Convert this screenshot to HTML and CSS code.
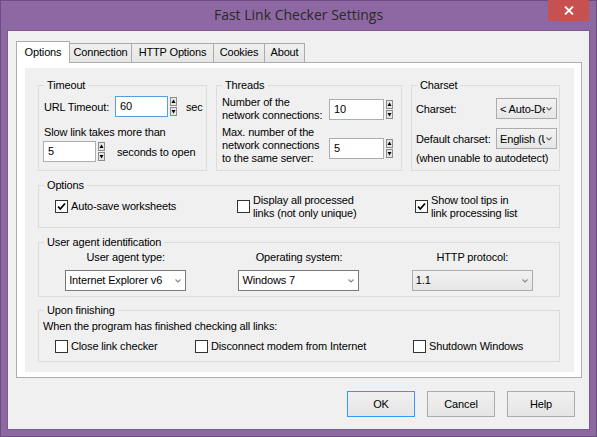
FILE: index.html
```html
<!DOCTYPE html>
<html>
<head>
<meta charset="utf-8">
<link rel="stylesheet" href="styles.css">
</head>
<body>
<div class="window">
  <div class="titlebar">
    <div class="title">Fast Link Checker Settings</div>
    <div class="close"><svg width="10" height="9" viewBox="0 0 10 9"><path d="M1 0.5L9 8.5M9 0.5L1 8.5" stroke="#fff" stroke-width="1.8"/></svg></div>
  </div>
  <div class="client">
    <div class="tabs">
      <div class="tab active t-options">Options</div>
      <div class="tab t-conn">Connection</div>
      <div class="tab t-http">HTTP Options</div>
      <div class="tab t-cookies">Cookies</div>
      <div class="tab t-about">About</div>
    </div>
    <div class="panel">
      <div class="page">
        <div class="row1">
          <div class="group g-timeout">
            <span class="gt">Timeout</span>
            <div class="row">
              <span class="lbl-url">URL Timeout:</span>
              <div class="spin"><div class="edit focus">60</div><svg class="spinbtn" width="8" height="21" viewBox="0 0 8 21"><rect x="0.5" y="1.5" width="6" height="8" fill="#e6e6e6" stroke="#8c8c8c"/><path d="M1.5 7h4L3.5 3.5z" fill="#000"/><rect x="0.5" y="11.5" width="6" height="8" fill="#e6e6e6" stroke="#8c8c8c"/><path d="M1.5 14h4L3.5 17.5z" fill="#000"/></svg></div>
              <span class="sec">sec</span>
            </div>
            <div class="slow">Slow link takes more than</div>
            <div class="row r-open">
              <div class="spin"><div class="edit">5</div><svg class="spinbtn" width="8" height="21" viewBox="0 0 8 21"><rect x="0.5" y="1.5" width="6" height="8" fill="#e6e6e6" stroke="#8c8c8c"/><path d="M1.5 7h4L3.5 3.5z" fill="#000"/><rect x="0.5" y="11.5" width="6" height="8" fill="#e6e6e6" stroke="#8c8c8c"/><path d="M1.5 14h4L3.5 17.5z" fill="#000"/></svg></div>
              <span class="open">seconds to open</span>
            </div>
          </div>
          <div class="group g-threads">
            <span class="gt">Threads</span>
            <div class="row">
              <span class="tlbl">Number of the<br>network connections:</span>
              <div class="spin"><div class="edit w55">10</div><svg class="spinbtn" width="8" height="21" viewBox="0 0 8 21"><rect x="0.5" y="1.5" width="6" height="8" fill="#e6e6e6" stroke="#8c8c8c"/><path d="M1.5 7h4L3.5 3.5z" fill="#000"/><rect x="0.5" y="11.5" width="6" height="8" fill="#e6e6e6" stroke="#8c8c8c"/><path d="M1.5 14h4L3.5 17.5z" fill="#000"/></svg></div>
            </div>
            <div class="row r-max">
              <span class="tlbl">Max. number of the<br>network connections<br>to the same server:</span>
              <div class="spin"><div class="edit w55">5</div><svg class="spinbtn" width="8" height="21" viewBox="0 0 8 21"><rect x="0.5" y="1.5" width="6" height="8" fill="#e6e6e6" stroke="#8c8c8c"/><path d="M1.5 7h4L3.5 3.5z" fill="#000"/><rect x="0.5" y="11.5" width="6" height="8" fill="#e6e6e6" stroke="#8c8c8c"/><path d="M1.5 14h4L3.5 17.5z" fill="#000"/></svg></div>
            </div>
          </div>
          <div class="group g-charset">
            <span class="gt">Charset</span>
            <div class="row">
              <span class="clbl">Charset:</span>
              <div class="select gray w61"><span class="sv">&lt; Auto-De</span><svg class="arr" width="6" height="4" viewBox="0 0 6 4"><path d="M0.5 0.5L3 3L5.5 0.5" fill="none" stroke="#6d6d6d" stroke-width="1.2"/></svg></div>
            </div>
            <div class="row r-def">
              <span class="clbl">Default charset:</span>
              <div class="select gray w61"><span class="sv">English (U</span><svg class="arr" width="6" height="4" viewBox="0 0 6 4"><path d="M0.5 0.5L3 3L5.5 0.5" fill="none" stroke="#6d6d6d" stroke-width="1.2"/></svg></div>
            </div>
            <div class="note">(when unable to autodetect)</div>
          </div>
        </div>

        <div class="group g-options">
          <span class="gt">Options</span>
          <div class="cb"><svg width="13" height="13" viewBox="0 0 13 13"><rect x="0.5" y="0.5" width="12" height="12" fill="#fff" stroke="#333"/><path d="M3 6.5L5.3 9L10 3.5" fill="none" stroke="#000" stroke-width="1.8"/></svg><span>Auto-save worksheets</span></div>
          <div class="cb"><svg width="13" height="13" viewBox="0 0 13 13"><rect x="0.5" y="0.5" width="12" height="12" fill="#fff" stroke="#333"/></svg><span>Display all processed<br>links (not only unique)</span></div>
          <div class="cb"><svg width="13" height="13" viewBox="0 0 13 13"><rect x="0.5" y="0.5" width="12" height="12" fill="#fff" stroke="#333"/><path d="M3 6.5L5.3 9L10 3.5" fill="none" stroke="#000" stroke-width="1.8"/></svg><span>Show tool tips in<br>link processing list</span></div>
        </div>

        <div class="group g-ua">
          <span class="gt">User agent identification</span>
          <div class="uacol">
            <span>User agent type:</span>
            <div class="select white w121"><span class="sv">Internet Explorer v6</span><svg class="arr" width="6" height="4" viewBox="0 0 6 4"><path d="M0.5 0.5L3 3L5.5 0.5" fill="none" stroke="#8a8a8a" stroke-width="1.2"/></svg></div>
          </div>
          <div class="uacol">
            <span>Operating system:</span>
            <div class="select white w121"><span class="sv">Windows 7</span><svg class="arr" width="6" height="4" viewBox="0 0 6 4"><path d="M0.5 0.5L3 3L5.5 0.5" fill="none" stroke="#8a8a8a" stroke-width="1.2"/></svg></div>
          </div>
          <div class="uacol">
            <span>HTTP protocol:</span>
            <div class="select gray w121"><span class="sv">1.1</span><svg class="arr" width="6" height="4" viewBox="0 0 6 4"><path d="M0.5 0.5L3 3L5.5 0.5" fill="none" stroke="#8a8a8a" stroke-width="1.2"/></svg></div>
          </div>
        </div>

        <div class="group g-upon">
          <span class="gt">Upon finishing</span>
          <div class="when">When the program has finished checking all links:</div>
          <div class="upon-items">
            <div class="cb"><svg width="13" height="13" viewBox="0 0 13 13"><rect x="0.5" y="0.5" width="12" height="12" fill="#fff" stroke="#333"/></svg><span>Close link checker</span></div>
            <div class="cb"><svg width="13" height="13" viewBox="0 0 13 13"><rect x="0.5" y="0.5" width="12" height="12" fill="#fff" stroke="#333"/></svg><span>Disconnect modem from Internet</span></div>
            <div class="cb"><svg width="13" height="13" viewBox="0 0 13 13"><rect x="0.5" y="0.5" width="12" height="12" fill="#fff" stroke="#333"/></svg><span>Shutdown Windows</span></div>
          </div>
        </div>
      </div>
    </div>
    <div class="buttons">
      <div class="btn default">OK</div>
      <div class="btn">Cancel</div>
      <div class="btn">Help</div>
    </div>
  </div>
</div>
</body>
</html>
```
FILE: styles.css
```css
* { box-sizing: border-box; }
html, body { margin: 0; padding: 0; }
body {
  width: 597px;
  height: 437px;
  overflow: hidden;
  background: #8d67a1;
  font-family: "Liberation Sans", Arial, sans-serif;
  font-size: 11px;
  letter-spacing: -0.15px;
  color: #000;
}
.window {
  width: 597px;
  height: 437px;
  background: #8e68a2;
  padding: 0 8px 8px;
  display: flex;
  flex-direction: column;
  box-shadow: inset 0 0 0 1px #6c4f80;
}
.titlebar {
  height: 31px;
  display: grid;
  grid-template-columns: 1fr auto 1fr;
  align-items: start;
}
.title {
  grid-column: 2;
  font-family: "Open Sans", "Noto Sans", sans-serif;
  font-size: 14px;
  letter-spacing: 0;
  color: #2a2a2a;
  line-height: 30px;
}
.close {
  grid-column: 3;
  justify-self: end;
  width: 41px;
  height: 21px;
  background: #c75050;
  display: flex;
  align-items: center;
  justify-content: center;
}
.client {
  height: 398px;
  background: #f0f0f0;
  padding: 10px 7px 0 8px;
  display: flex;
  flex-direction: column;
  box-shadow: 0 0 0 1px #7a5b8e;
}
.tabs {
  height: 21px;
  display: flex;
  align-items: flex-end;
}
.tab {
  height: 19px;
  border: 1px solid #acacac;
  border-bottom: none;
  background: linear-gradient(#f0f0f0, #e5e5e5);
  margin-right: -1px;
  text-align: center;
  line-height: 17px;
}
.tab.active {
  height: 22px;
  margin-bottom: -1px;
  background: #fff;
  position: relative;
  z-index: 1;
  line-height: 20px;
}
.t-options { width: 54px; }
.t-conn { width: 63px; }
.t-http { width: 83px; }
.t-cookies { width: 52px; }
.t-about { width: 41px; }
.panel {
  height: 316px;
  border: 1px solid #acacac;
  background: #fff;
  padding: 5px 7px 5px 8px;
}
.page {
  height: 304px;
  background: #f0f0f0;
  padding: 17px 14px 0 13px;
}
.group {
  position: relative;
  border: 1px solid #dcdcdc;
}
.gt {
  position: absolute;
  top: -7px;
  left: 5px;
  padding: 0 3px;
  background: #f0f0f0;
  line-height: 13px;
  white-space: nowrap;
}
.row1 {
  display: grid;
  grid-template-columns: 169px 186px 1fr;
  gap: 9px;
}
.row1 .group { height: 86px; }
.row { display: flex; align-items: center; }
.spin { display: flex; align-items: center; gap: 2px; }
.edit {
  width: 53px;
  height: 21px;
  background: #fff;
  border: 1px solid #abadb3;
  padding-left: 4px;
  line-height: 19px;
}
.edit.focus { border-color: #569de5; }
.edit.w55 { width: 55px; }
.g-timeout { padding: 10px 0 0 5px; }
.lbl-url { width: 71px; }
.sec { margin-left: 8px; }
.slow { margin-top: 9px; line-height: 13px; }
.r-open { margin-top: 2px; margin-left: -1px; }
.open { margin-left: 11px; }
.g-threads { padding: 10px 0 0 5px; }
.tlbl { width: 107px; line-height: 13px; }
.r-max { margin-top: 4px; }
.r-max .spin { margin-top: 6px; }
.g-charset { padding: 12px 0 0 4px; }
.clbl { width: 80px; }
.r-def { margin-top: 9px; }
.note { margin-top: 3px; line-height: 13px; white-space: nowrap; }
.select {
  height: 21px;
  display: flex;
  align-items: center;
  padding: 0 4px 0 3px;
  overflow: hidden;
}
.select.gray {
  background: linear-gradient(#f2f2f2, #e6e6e6);
  border: 1px solid #acacac;
}
.select.white {
  background: #fff;
  border: 1px solid #7a7a7a;
}
.sv { flex: 1; white-space: nowrap; overflow: hidden; }
.arr { flex: none; margin-left: 1px; }
.w61 { width: 61px; }
.w121 { width: 121px; }
.g-options {
  margin-top: 14px;
  height: 43px;
  display: grid;
  grid-template-columns: 182px 178px 1fr;
  align-items: center;
  padding-left: 16px;
}
.cb { display: flex; align-items: center; gap: 3px; line-height: 13px; white-space: nowrap; }
.cb svg { flex: none; }
.g-ua {
  margin-top: 14px;
  height: 55px;
  padding-top: 8px;
  display: grid;
  grid-template-columns: 1fr 1fr 1fr;
}
.uacol { display: flex; flex-direction: column; align-items: center; line-height: 13px; }
.uacol .select { margin-top: 6px; }
.g-upon {
  margin-top: 13px;
  height: 52px;
  padding: 9px 0 0 4px;
}
.when { line-height: 13px; }
.upon-items {
  margin-top: 7px;
  display: grid;
  grid-template-columns: 140px 218px 1fr;
  padding-left: 12px;
}
.buttons {
  display: flex;
  justify-content: flex-end;
  gap: 12px;
  margin-top: 13px;
  padding-right: 7px;
}
.btn {
  width: 68px;
  height: 26px;
  border: 1px solid #acacac;
  background: linear-gradient(#f0f0f0, #e5e5e5);
  display: flex;
  align-items: center;
  justify-content: center;
}
.btn.default { border-color: #3399ff; }
```
